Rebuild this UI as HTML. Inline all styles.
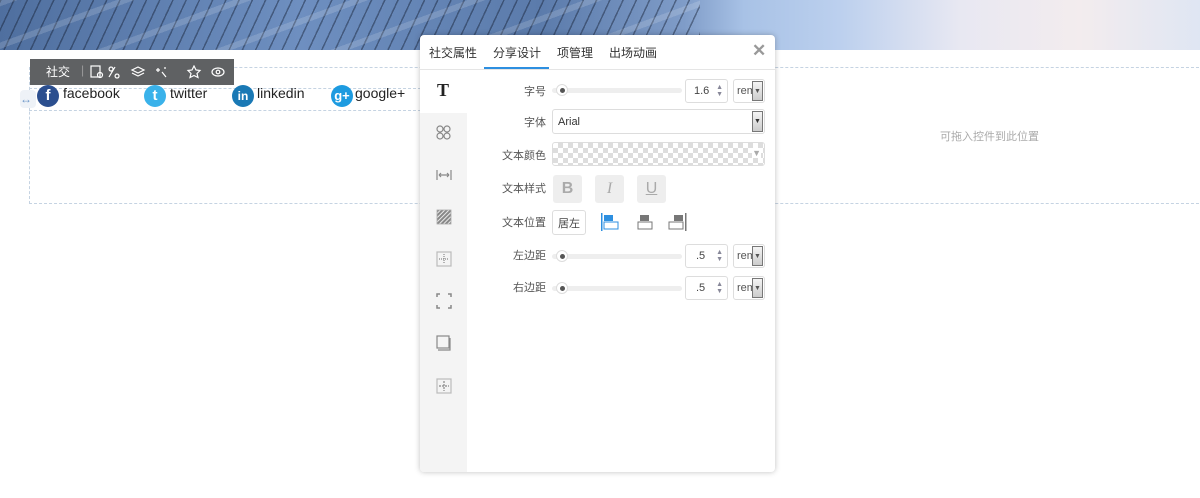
<!DOCTYPE html>
<html><head><meta charset="utf-8"><style>
*{margin:0;padding:0;box-sizing:border-box}
body{width:1200px;height:498px;overflow:hidden;background:#fff;font-family:"Liberation Sans","Noto Sans CJK SC",sans-serif;position:relative}
.banner{position:absolute;left:0;top:0;width:1200px;height:50px;background:linear-gradient(90deg,#4f6f9f 0%,#6e8fc0 25%,#5b7bab 45%,#7f9cc8 57%,#a8c2e6 62%,#bcd0ee 70%,#e8e8f2 80%,#f3ecee 90%,#dfe6f3 100%);overflow:hidden}
.stripes{position:absolute;left:0;top:0;width:700px;height:50px;background:repeating-linear-gradient(115deg,rgba(20,30,50,.45) 0 1.5px,transparent 1.5px 12px);}
.stripes2{position:absolute;left:0;top:0;width:700px;height:50px;background:repeating-linear-gradient(160deg,rgba(255,255,255,.15) 0 6px,transparent 6px 40px);}
.dash{position:absolute;border:1px dashed #c5d3e2}
.tb{position:absolute;left:30px;top:59px;width:204px;height:26px;background:#5f6163;color:#fff;font-size:12px}
.tb span{position:absolute;top:4px}
.soc{position:absolute;top:85px;font-size:14px;color:#222}
.ic{position:absolute;width:22px;height:22px;border-radius:50%;color:#fff;font-weight:bold;text-align:center;font-size:15px;line-height:22px;top:85px}
.panel{position:absolute;left:420px;top:35px;width:355px;height:437px;background:#fff;border-radius:4px;box-shadow:0 0 6px rgba(0,0,0,.25);overflow:hidden}
.tabs{position:absolute;top:0;left:0;width:355px;height:35px;border-bottom:1px solid #e5e5e5;font-size:12px;color:#333}
.tabs span{position:absolute;top:9px}
.side{position:absolute;left:0;top:35px;width:47px;height:402px;background:#f4f4f4}
.lbl{position:absolute;font-size:11px;color:#555;text-align:right;width:60px;left:66px}
.slider{position:absolute;left:132px;width:130px;height:5px;background:#eee;border-radius:3px}
.knob{position:absolute;left:136px;width:12px;height:12px;border-radius:50%;background:#fff;border:1px solid #ddd}
.knob:after{content:"";position:absolute;left:3px;top:3px;width:5px;height:5px;border-radius:50%;background:#555}
.num{position:absolute;left:265px;width:43px;height:24px;border:1px solid #ddd;border-radius:3px;font-size:11px;color:#444}
.unit{position:absolute;left:313px;width:32px;height:24px;border:1px solid #ddd;border-radius:3px;font-size:11px;color:#555;overflow:hidden}
.dd{position:absolute;right:1px;top:1px;width:11px;height:20px;background:linear-gradient(#f4f4f4,#ccc);border:1px solid #777;font-size:7px;text-align:center;line-height:20px}
.btn{position:absolute;top:140px;width:29px;height:28px;background:#eee;border-radius:3px;color:#aaa;font-size:16px;text-align:center;line-height:28px}
</style></head><body>
<div class="banner"><div class="stripes"></div><div class="stripes2"></div></div>
<div class="dash" style="left:29px;top:67px;width:1180px;height:137px"></div>
<div class="dash" style="left:29px;top:88px;width:392px;height:23px"></div>
<div style="position:absolute;left:20px;top:90px;width:16px;height:18px;background:#eef2f7;border-radius:4px;color:#6b95c8;font-size:12px;line-height:18px">↔</div>
<div class="tb"><span style="left:16px">社交</span><span style="left:51px;top:4px;color:#999">|</span>
<svg style="position:absolute;left:60px;top:6px" width="140" height="14" fill="none" stroke="#fff" stroke-width="1.2">
<rect x="1" y="1" width="9" height="11"/><circle cx="10" cy="10" r="2.5"/>
<path d="M25 2l-6 10M21 2a2 2 0 1 0 .1 0M27 9a2 2 0 1 0 .1 0"/>
<path d="M48 2l6 3-6 3-6-3zM42 8l6 3 6-3"/>
<path d="M68 3v4M66 5h4M72 7l4 5M74 3h2"/>
<path d="M104 1l2 4 4 .5-3 3 1 4-4-2-4 2 1-4-3-3 4-.5z"/>
<ellipse cx="128" cy="7" rx="6" ry="4"/><circle cx="128" cy="7" r="1.8"/></svg></div>
<div class="ic" style="left:37px;background:#2c4f8f">f</div><div class="soc" style="left:63px">facebook</div>
<div class="ic" style="left:144px;background:#3ab2ea">t</div><div class="soc" style="left:170px">twitter</div>
<div class="ic" style="left:232px;background:#1a79b5;font-size:12px">in</div><div class="soc" style="left:257px">linkedin</div>
<div class="ic" style="left:331px;background:#1d9be0;font-size:13px">g+</div><div class="soc" style="left:355px">google+</div>
<div style="position:absolute;left:940px;top:128px;font-size:11px;color:#aaa">可拖入控件到此位置</div>
<div class="panel">
<div class="tabs"><span style="left:9px">社交属性</span><span style="left:73px">分享设计</span><span style="left:137px">项管理</span><span style="left:189px">出场动画</span>
<span style="left:332px;top:6px;font-size:17px;color:#999;font-weight:bold">✕</span>
<div style="position:absolute;left:64px;top:32px;width:65px;height:2px;background:#2d8fe0"></div></div>
<div class="side"><div style="width:47px;height:43px;background:#fff"></div>
<div style="position:absolute;left:17px;top:10px;font-family:'Liberation Serif',serif;font-weight:bold;font-size:18px;color:#222">T</div>
<svg style="position:absolute;left:0;top:0" width="47" height="402" fill="none" stroke="#888" stroke-width="1.2">
<defs><pattern id="h" width="3" height="3" patternUnits="userSpaceOnUse" patternTransform="rotate(45)"><rect width="1.5" height="3" fill="#888"/></pattern></defs>
<circle cx="20" cy="59" r="3"/><circle cx="27" cy="59" r="3"/><circle cx="20" cy="66" r="3"/><circle cx="27" cy="66" r="3"/>
<path d="M17 100v10M31 100v10M19 105h10M19 105l2-2M19 105l2 2M29 105l-2-2M29 105l-2 2"/>
<rect x="17" y="140" width="14" height="14" fill="url(#h)" stroke="#aaa" stroke-width=".8"/>
<rect x="17" y="182" width="14" height="14" stroke="#bbb"/><path d="M24 184v10M19 189h10" stroke-dasharray="1 1"/>
<path d="M17 227v-3h3M28 224h3v3M31 235v3h-3M20 238h-3v-3" stroke-width="1.5"/>
<rect x="17" y="266" width="12" height="12"/><path d="M30 268v12h-12"/>
<rect x="17" y="309" width="14" height="14" stroke="#bbb"/><path d="M24 311v10M19 316h10" stroke-dasharray="2 1"/></svg></div>
<div class="lbl" style="top:48px">字号</div><div class="slider" style="top:53px"></div><div class="knob" style="top:49px"></div>
<div class="num" style="top:44px"><span style="position:absolute;left:8px;top:5px">1.6</span><span style="position:absolute;right:4px;top:4px;font-size:7px;color:#889;line-height:7px">▲<br>▼</span></div>
<div class="unit" style="top:44px"><span style="position:absolute;left:3px;top:5px">rem</span><div class="dd">▼</div></div>
<div class="lbl" style="top:79px">字体</div>
<div style="position:absolute;left:132px;top:74px;width:213px;height:25px;border:1px solid #ddd;border-radius:3px;font-size:11px;color:#333"><span style="position:absolute;left:5px;top:6px">Arial</span><div class="dd" style="height:21px">▼</div></div>
<div class="lbl" style="top:112px">文本颜色</div>
<div style="position:absolute;left:132px;top:107px;width:213px;height:24px;border:1px solid #ddd;border-radius:3px;background:repeating-conic-gradient(#ddd 0 25%,#fff 0 50%) 0 0/10px 10px"><span style="position:absolute;right:3px;top:5px;font-size:9px;color:#aaa;background:#fff">▼</span></div>
<div class="lbl" style="top:145px">文本样式</div>
<div class="btn" style="left:133px;font-weight:bold">B</div><div class="btn" style="left:175px;font-style:italic;font-family:'Liberation Serif',serif">I</div><div class="btn" style="left:217px;text-decoration:underline">U</div>
<div class="lbl" style="top:179px">文本位置</div>
<div style="position:absolute;left:132px;top:175px;width:34px;height:25px;border:1px solid #ddd;border-radius:3px;font-size:11px;color:#444;padding:4px 0 0 5px">居左</div>
<svg style="position:absolute;left:180px;top:175px" width="90" height="25"><rect x="1" y="3" width="1.5" height="18" fill="#2d8fe0"/><rect x="4" y="5" width="9" height="6" fill="#2d8fe0"/><rect x="4" y="12" width="14" height="7" fill="none" stroke="#2d8fe0"/>
<rect x="40" y="5" width="9" height="6" fill="#777"/><rect x="38" y="12" width="14" height="7" fill="none" stroke="#777"/>
<rect x="74" y="5" width="9" height="6" fill="#777"/><rect x="69" y="12" width="14" height="7" fill="none" stroke="#777"/><rect x="85" y="3" width="1.5" height="18" fill="#777"/></svg>
<div class="lbl" style="top:212px">左边距</div><div class="slider" style="top:219px"></div><div class="knob" style="top:215px"></div>
<div class="num" style="top:209px"><span style="position:absolute;left:10px;top:5px">.5</span><span style="position:absolute;right:4px;top:4px;font-size:7px;color:#889;line-height:7px">▲<br>▼</span></div>
<div class="unit" style="top:209px"><span style="position:absolute;left:3px;top:5px">rem</span><div class="dd">▼</div></div>
<div class="lbl" style="top:244px">右边距</div><div class="slider" style="top:251px"></div><div class="knob" style="top:247px"></div>
<div class="num" style="top:241px"><span style="position:absolute;left:10px;top:5px">.5</span><span style="position:absolute;right:4px;top:4px;font-size:7px;color:#889;line-height:7px">▲<br>▼</span></div>
<div class="unit" style="top:241px"><span style="position:absolute;left:3px;top:5px">rem</span><div class="dd">▼</div></div>
</div>
</body></html>
